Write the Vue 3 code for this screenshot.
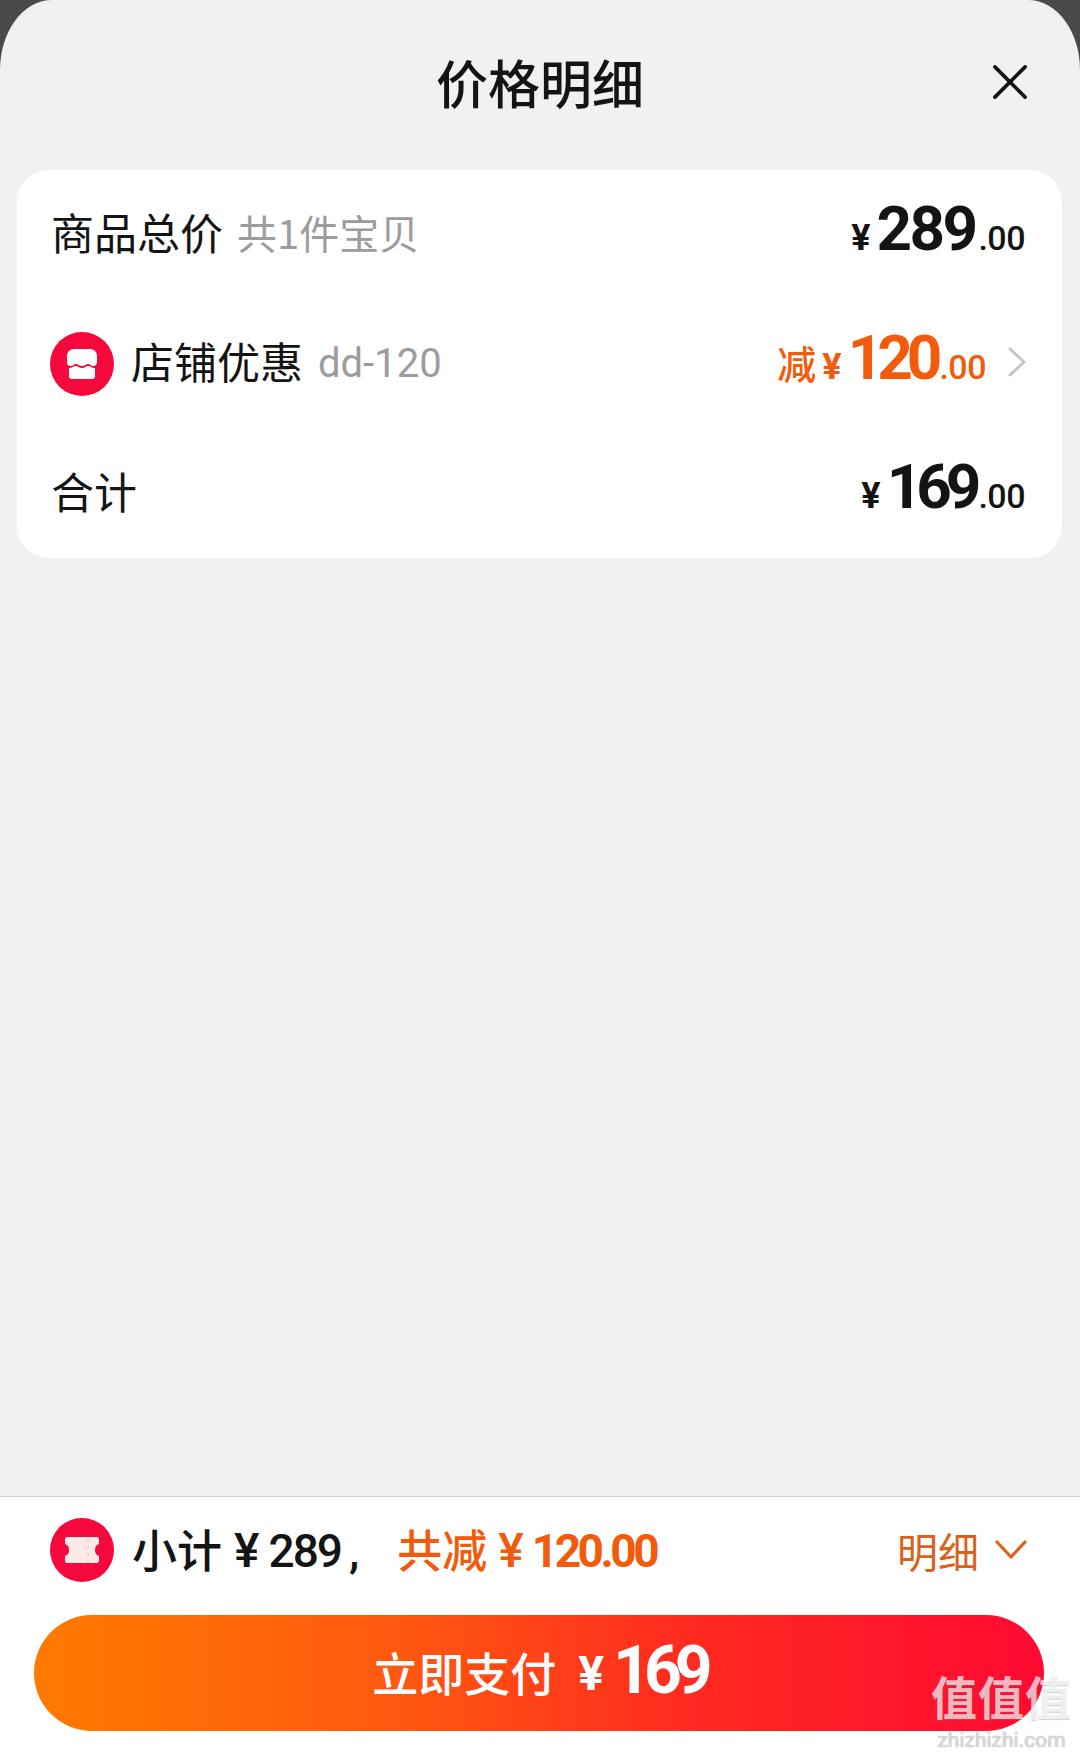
<template>
  <div class="screen">
    <div class="sheet">
      <div class="header">
        <span></span>
        <h3 class="title">价格明细</h3>
        <svg class="close-btn" viewBox="0 0 36 36" width="34" height="34">
          <path d="M2 2 L34 34 M34 2 L2 34" fill="none" stroke="#111" stroke-width="3.8" stroke-linecap="round" />
        </svg>
      </div>

      <div class="card">
        <div class="row">
          <span class="name">商品总价</span>
          <span class="sub">共1件宝贝</span>
          <div class="price">
            <span class="yen">¥</span><span class="int">289</span><span class="dec">.00</span>
          </div>
        </div>

        <div class="row">
          <svg class="badge" viewBox="0 0 64 64" width="64" height="64">
            <circle cx="32" cy="32" r="32" fill="#f5093c" />
            <path d="M24 17 H40 C44 17 47 20 47 24 V30 C47 33 45 34 43 34 C41 34 40 32 38 32 C36 32 35 34 32 34 C29 34 28 32 26 32 C24 32 23 34 21 34 C19 34 17 33 17 30 V24 C17 20 20 17 24 17 Z" fill="#fff" />
            <path d="M19 36 C21 36.5 24 34 26 34 C28 34 29 36 32 36 C35 36 36 34 38 34 C40 34 43 36.5 45 36 V44 C45 46 44 47 42 47 H22 C20 47 19 46 19 44 Z" fill="#fff" />
          </svg>
          <span class="name">店铺优惠</span>
          <span class="sub code">dd-120</span>
          <div class="price discount">
            <span class="minus">减</span><span class="yen">¥</span><span class="int tight">120</span><span class="dec">.00</span>
          </div>
          <svg class="arrow" viewBox="0 0 18 30" width="18" height="30">
            <path d="M2 2 L16 15 L2 28" fill="none" stroke="#c4c4c4" stroke-width="3" stroke-linecap="round" stroke-linejoin="round" />
          </svg>
        </div>

        <div class="row">
          <span class="name">合计</span>
          <div class="price">
            <span class="yen">¥</span><span class="int tight">169</span><span class="dec">.00</span>
          </div>
        </div>
      </div>

      <div class="footer">
        <div class="summary">
          <svg class="badge" viewBox="0 0 64 64" width="64" height="64">
            <circle cx="32" cy="32" r="32" fill="#f5093c" />
            <path d="M17 19 H47 C48 19 49 20 49 21 V26 C46 27 45 29 45 32 C45 35 46 37 49 38 V43 C49 44 48 45 47 45 H17 C16 45 15 44 15 43 V38 C18 37 19 35 19 32 C19 29 18 27 15 26 V21 C15 20 16 19 17 19 Z" fill="#fbeae5" />
            <path d="M38 21 V44" fill="none" stroke="#f3c4bd" stroke-width="1.5" stroke-dasharray="3 4" />
          </svg>
          <span class="sum-label">小计</span>
          <span class="sum-amount"><i>¥</i><b>289</b>,</span>
          <span class="sum-off">共减</span>
          <span class="sum-off-amount"><i>¥</i><b>120.00</b></span>
          <span class="detail">明细</span>
          <svg class="fold" viewBox="0 0 32 20" width="32" height="20">
            <path d="M2 2 L16 17 L30 2" fill="none" stroke="#d9621c" stroke-width="3.2" stroke-linecap="round" stroke-linejoin="round" />
          </svg>
        </div>
        <button class="pay-btn">
          <span class="pay-text">立即支付</span>
          <span class="pay-yen">¥</span>
          <span class="pay-num">169</span>
        </button>
      </div>
    </div>

    <div class="watermark">
      <div class="wm-name">值值值</div>
      <div class="wm-url">zhizhizhi.com</div>
    </div>
  </div>
</template>

<script setup>
</script>

<style scoped>
.screen {
  position: relative;
  width: 1080px;
  height: 1753px;
  overflow: hidden;
  background: #4a4a4a;
  font-family: "Noto Sans CJK SC", "Roboto", sans-serif;
  color: #141414;
}

.sheet {
  height: 100%;
  display: flex;
  flex-direction: column;
  background: #f1f1f1;
  border-radius: 52px 52px 0 0 / 70px 70px 0 0;
}

.header {
  height: 170px;
  flex-shrink: 0;
  display: grid;
  grid-template-columns: 1fr auto 1fr;
  align-items: center;
  padding: 0 53px;
}
.title {
  margin: 0 0 6px;
  font-size: 52px;
  font-weight: 500;
  line-height: 1;
}
.close-btn {
  justify-self: end;
  margin-bottom: 6px;
}

.card {
  height: 388px;
  margin: 0 18px 0 17px;
  flex-shrink: 0;
  display: grid;
  grid-template-rows: repeat(3, 1fr);
  background: #fff;
  border-radius: 32px;
  padding: 0 37px 0 33px;
}

.row {
  display: flex;
  align-items: center;
}
.name {
  font-size: 43px;
  line-height: 1;
  margin-left: 1px;
  margin-bottom: 6px;
}
.badge {
  flex-shrink: 0;
  margin-right: 17px;
}
.badge + .name {
  margin-left: 0;
}
.sub {
  margin-left: 14px;
  margin-bottom: 6px;
  font-size: 40px;
  line-height: 1;
  color: #9c9c9c;
}
.code {
  margin-left: 15px;
  margin-bottom: 0;
  font-family: "Roboto", sans-serif;
}

.price {
  margin-left: auto;
  margin-bottom: 12px;
  display: flex;
  align-items: baseline;
  font-family: "Roboto", sans-serif;
  font-weight: 700;
  line-height: 1;
}
.yen {
  font-size: 36px;
  margin-right: 6px;
}
.int {
  font-size: 62px;
  letter-spacing: -2.6px;
}
.int.tight {
  letter-spacing: -6px;
}
.dec {
  font-size: 34px;
  margin-left: 3px;
  font-weight: 500;
  letter-spacing: -0.5px;
}
.discount {
  color: #f25a0c;
}
.minus {
  font-family: "Noto Sans CJK SC", sans-serif;
  font-size: 39px;
  font-weight: 500;
  margin-right: 6px;
}
.arrow {
  margin-left: 22px;
  margin-bottom: 4px;
  margin-right: -1px;
  flex-shrink: 0;
}

.footer {
  margin-top: auto;
  flex-shrink: 0;
  height: 257px;
  background: #fff;
  border-top: 1px solid #cfcfcf;
  box-sizing: border-box;
}
.summary {
  height: 106px;
  padding: 0 53px 0 50px;
  display: flex;
  align-items: center;
}
.sum-label {
  font-size: 45px;
  font-weight: 500;
  line-height: 1;
  margin-left: 1px;
  margin-bottom: 4px;
}
.sum-amount,
.sum-off-amount {
  font-family: "Roboto", sans-serif;
  font-size: 46px;
  font-weight: 500;
  display: flex;
  align-items: baseline;
}
.sum-amount i,
.sum-off-amount i {
  font-style: normal;
  font-size: 48px;
}
.sum-amount {
  margin-left: 12px;
}
.sum-amount b {
  margin: 0 8px 0 9px;
  font-weight: 500;
  letter-spacing: -2px;
}
.sum-off {
  margin-left: 38px;
  margin-bottom: 4px;
  font-size: 45px;
  font-weight: 500;
  line-height: 1;
  color: #f25a0c;
}
.sum-off-amount {
  margin-left: 11px;
  color: #f25a0c;
}
.sum-off-amount b {
  margin-left: 8px;
  font-weight: 700;
  letter-spacing: -3.5px;
}
.detail {
  margin-left: auto;
  font-size: 41px;
  line-height: 1;
  color: #d9621c;
}
.fold {
  margin-left: 16px;
  flex-shrink: 0;
}

.pay-btn {
  display: flex;
  align-items: center;
  justify-content: center;
  width: 1010px;
  height: 116px;
  margin: 12px 0 0 34px;
  padding: 0;
  border: none;
  border-radius: 58px;
  background: linear-gradient(90deg, #ff7a00 0%, #ff5a10 35%, #ff2a20 65%, #ff0a32 100%);
  color: #fff;
  font-family: "Noto Sans CJK SC", sans-serif;
}
.pay-text {
  margin-bottom: 4px;
  font-size: 46px;
  font-weight: 500;
  line-height: 1;
}
.pay-yen {
  margin-left: 22px;
  font-family: "Roboto", sans-serif;
  font-size: 48px;
  font-weight: 700;
}
.pay-num {
  margin-left: 9px;
  margin-bottom: 6px;
  font-family: "Roboto", sans-serif;
  font-size: 66px;
  font-weight: 700;
  letter-spacing: -7px;
}

.watermark {
  position: absolute;
  left: 929px;
  top: 1662px;
  width: 145px;
  text-align: center;
  pointer-events: none;
}
.wm-name {
  font-size: 46px;
  font-weight: 700;
  line-height: 66px;
  letter-spacing: 1px;
  color: rgba(255, 255, 255, 0.68);
  text-shadow: 0 1px 1px rgba(120, 120, 120, 0.35);
}
.wm-url {
  margin-top: 1px;
  font-family: "Roboto", sans-serif;
  font-size: 21px;
  line-height: 22px;
  color: rgba(255, 255, 255, 0.7);
  text-shadow: 0 0 1px rgba(90, 90, 90, 0.8);
}
</style>
<style>
html, body { margin: 0; }
</style>
